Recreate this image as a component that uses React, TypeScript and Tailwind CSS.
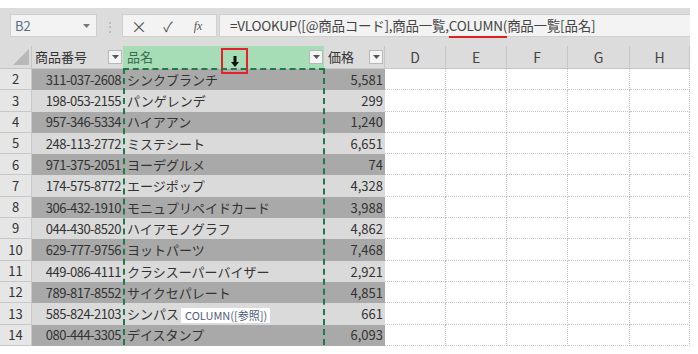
import React from "react";

const rows: [number, string, string, string][] = [
  [2, "311-037-2608", "シンクブランチ", "5,581"],
  [3, "198-053-2155", "パンゲレンデ", "299"],
  [4, "957-346-5334", "ハイアアン", "1,240"],
  [5, "248-113-2772", "ミステシート", "6,651"],
  [6, "971-375-2051", "ヨーデグルメ", "74"],
  [7, "174-575-8772", "エージポップ", "4,328"],
  [8, "306-432-1910", "モニュプリペイドカード", "3,988"],
  [9, "044-430-8520", "ハイアモノグラフ", "4,862"],
  [10, "629-777-9756", "ヨットパーツ", "7,468"],
  [11, "449-086-4111", "クラシスーパーバイザー", "2,921"],
  [12, "789-817-8552", "サイクセパレート", "4,851"],
  [13, "585-824-2103", "シンパス", "661"],
  [14, "080-444-3305", "デイスタンプ", "6,093"],
];

const extra = ["D", "E", "F", "G", "H"];
const extraW = ["w-[61px]", "w-[61px]", "w-[61px]", "w-[62px]", "w-[60px]"];

function Filter() {
  return (
    <div className="w-[14px] h-[14px] border border-[#b8b8b8] bg-[#f4f4f4] flex items-center justify-center">
      <svg width="7" height="4" viewBox="0 0 7 4">
        <path d="M0 0 L7 0 L3.5 4 Z" fill="#555" />
      </svg>
    </div>
  );
}

export default function App() {
  return (
    <div
      className="w-[698px] h-[354px] bg-white relative overflow-hidden text-[#333]"
      style={{ fontFamily: '"Noto Sans CJK JP", "Noto Sans", sans-serif' }}
    >
      <div className="h-[8px]" />
      <div className="w-[690px] bg-[#dcdcdc]">
        {/* formula bar */}
        <div className="h-[38px] flex items-start pt-[6px]">
          <div className="ml-[10px] w-[87px] h-[23px] bg-[#f3f3f3] border border-[#cfcfcf] flex items-center justify-between px-[4px]">
            <span className="text-[13px] text-[#5a6b85]">B2</span>
            <svg width="7" height="4" viewBox="0 0 7 4" className="mr-[2px]">
              <path d="M0 0 L7 0 L3.5 4 Z" fill="#777" />
            </svg>
          </div>
          <div className="w-[25px] h-[23px] flex items-center justify-center text-[#aaa] text-[12px]">⋮</div>
          <div className="w-[95px] h-[23px] bg-[#f3f3f3] border border-[#cfcfcf] flex items-center">
            <span className="w-[32px] text-center text-[16px] text-[#555] leading-none">×</span>
            <span className="w-[26px] text-center text-[14px] text-[#555] leading-none">✓</span>
            <span className="w-[34px] text-center text-[12px] text-[#555] italic" style={{ fontFamily: '"Liberation Serif", serif' }}>fx</span>
          </div>
          <div className="ml-[2px] flex-1 h-[23px] bg-[#f3f3f3] border-l border-t border-b border-[#cfcfcf] flex items-center pl-[10px] relative">
            <span className="text-[13.5px] text-[#444] tracking-[-0.25px] whitespace-nowrap">
              =VLOOKUP([@商品コード],商品一覧,<span className="relative">COLUMN(<span className="absolute left-0 right-0 bottom-[-3px] h-[2px] bg-[#e02020]" /></span>商品一覧[品名]
            </span>
          </div>
        </div>
        {/* header row */}
        <div className="h-[23px] flex border-b border-[#c6c6c6]">
          <div className="w-[32px] relative border-r border-[#c6c6c6]">
            <svg width="16" height="16" viewBox="0 0 16 16" className="absolute right-[2px] bottom-[3px]">
              <path d="M16 0 L16 16 L0 16 Z" fill="#b8b8b8" />
            </svg>
          </div>
          <div className="w-[91px] flex items-center justify-between pl-[3px] pr-[1px] text-[13px]">
            <span>商品番号</span>
            <Filter />
          </div>
          <div className="w-[201px] bg-[#a6dcb6] flex items-center justify-between pl-[4px] pr-[1px] text-[13px] text-[#3d6b4d]">
            <span>品名</span>
            <Filter />
          </div>
          <div className="w-[61px] flex items-center justify-between pl-[4px] pr-[1px] text-[13px] border-r border-[#c6c6c6]">
            <span>価格</span>
            <Filter />
          </div>
          {extra.map((c, i) => (
            <div key={c} className={`${extraW[i]} flex items-center justify-center text-[14px] text-[#444] border-r border-[#c6c6c6]`}>
              {c}
            </div>
          ))}
        </div>
      </div>
      {/* body rows */}
      <div className="w-[690px]">
        {rows.map(([n, code, name, price]) => {
          const dark = n % 2 === 0;
          const band = dark ? "bg-[#a9a9a9]" : "bg-[#dadada]";
          return (
            <div key={n} className="flex h-[21.3px] text-[13px]">
              <div className="w-[32px] bg-[#e6e6e6] border-b border-r border-[#c8c8c8] flex items-center justify-center text-[#333]">
                {n}
              </div>
              <div className={`w-[91px] ${band} flex items-center justify-end pr-[2px] tracking-[-0.5px] whitespace-nowrap overflow-hidden`}>{code}</div>
              <div className={`w-[201px] ${band} flex items-center pl-[4px] whitespace-nowrap overflow-hidden`}>{name}</div>
              <div className={`w-[61px] ${band} flex items-center justify-end pr-[2px]`}>{price}</div>
              {extra.map((c, i) => (
                <div key={c} className={`${extraW[i]} border-r border-b border-dotted border-[#c8c8c8]`} />
              ))}
            </div>
          );
        })}
      </div>

      {/* red box around arrow */}
      <div className="absolute left-[221px] top-[48px] w-[27px] h-[26px] border-2 border-[#e8202a] flex items-center justify-center">
        <svg width="8" height="11" viewBox="0 0 8 11">
          <path d="M2.5 0 H5.5 V6 H8 L4 11 L0 6 H2.5 Z" fill="#111" />
        </svg>
      </div>

      {/* marching ants */}
      <div className="absolute left-[123px] top-[68px] w-[202px] h-[277px] border-2 border-b-0 border-dashed border-[#1f7a45]" />

      {/* tooltip */}
      <div className="absolute left-[181px] top-[308px] w-[89px] h-[15px] bg-white flex items-center px-[4px] text-[11px] text-[#4d5d7d] whitespace-nowrap">
        COLUMN([参照])
      </div>
    </div>
  );
}
